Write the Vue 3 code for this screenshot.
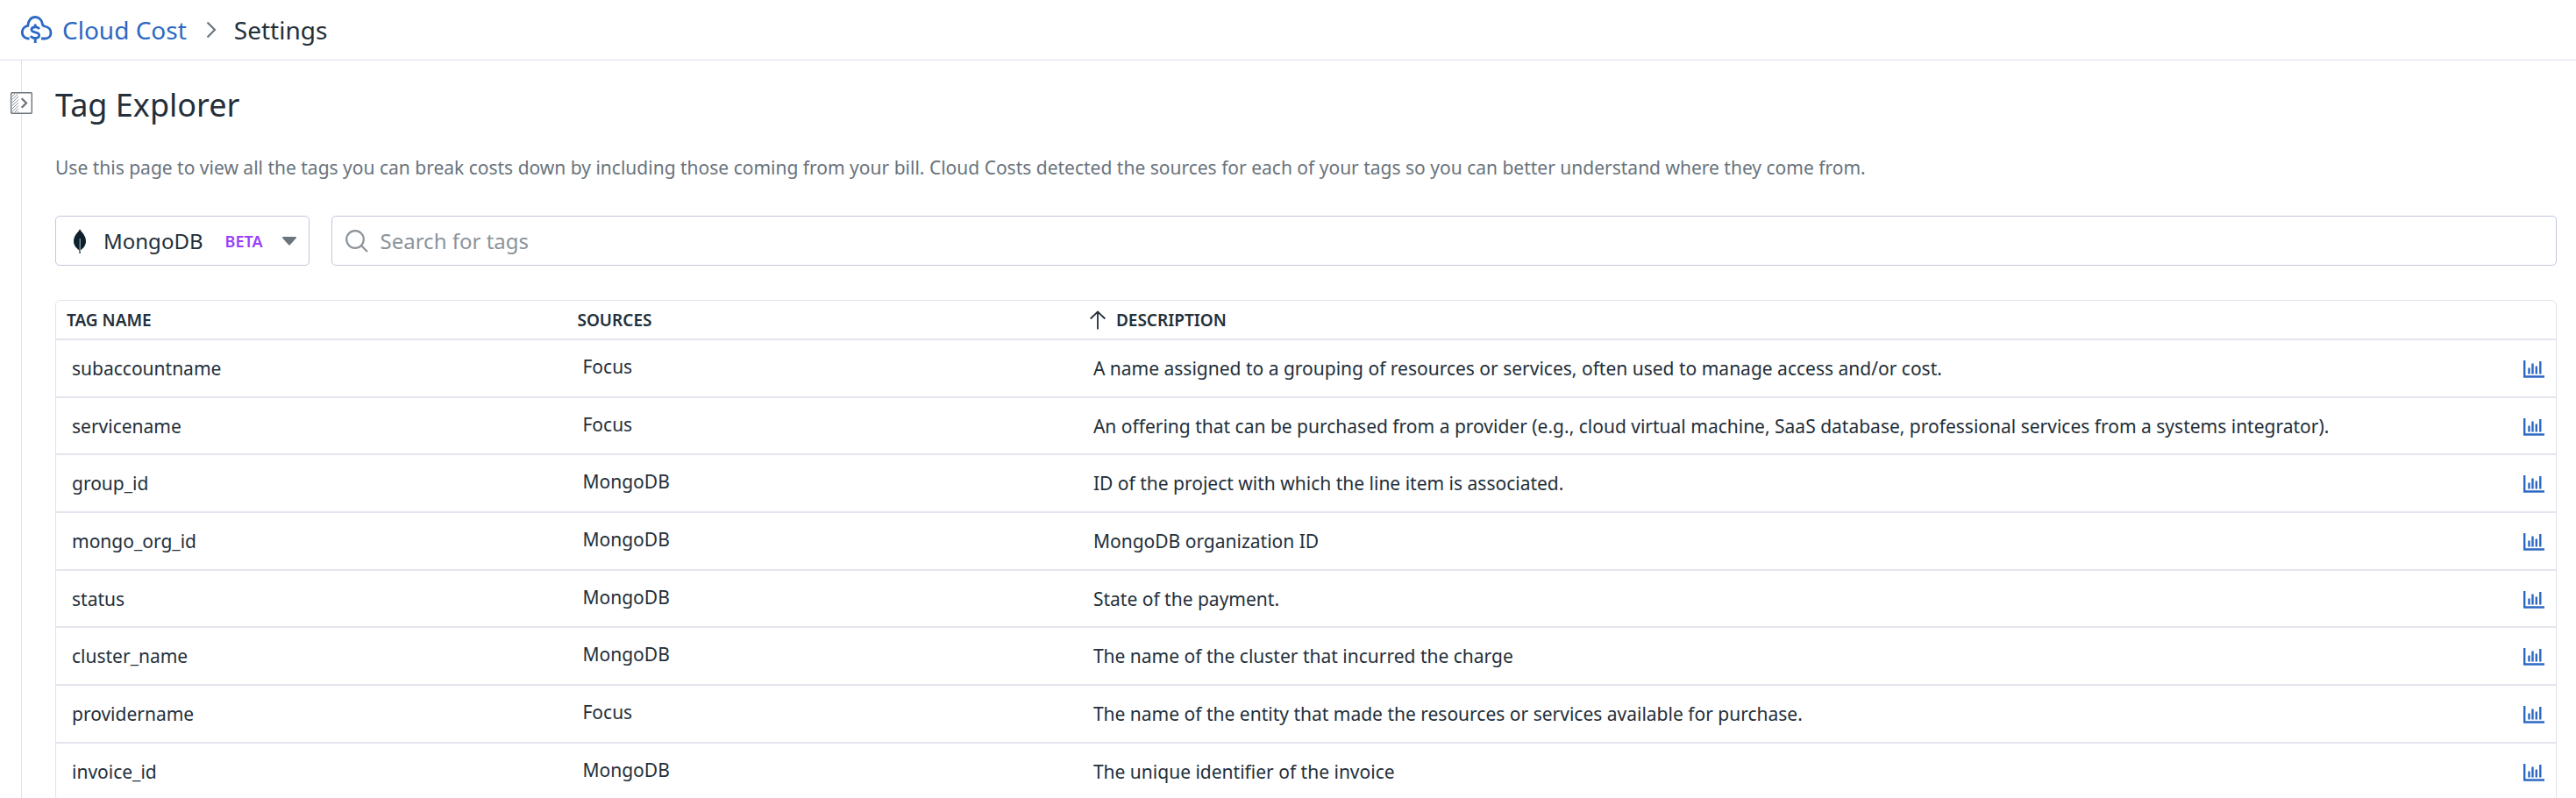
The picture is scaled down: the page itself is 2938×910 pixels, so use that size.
<script setup>
import { ref, computed } from 'vue'

const query = ref('')

const tags = [
  { name: 'subaccountname', source: 'Focus', description: 'A name assigned to a grouping of resources or services, often used to manage access and/or cost.' },
  { name: 'servicename', source: 'Focus', description: 'An offering that can be purchased from a provider (e.g., cloud virtual machine, SaaS database, professional services from a systems integrator).' },
  { name: 'group_id', source: 'MongoDB', description: 'ID of the project with which the line item is associated.' },
  { name: 'mongo_org_id', source: 'MongoDB', description: 'MongoDB organization ID' },
  { name: 'status', source: 'MongoDB', description: 'State of the payment.' },
  { name: 'cluster_name', source: 'MongoDB', description: 'The name of the cluster that incurred the charge' },
  { name: 'providername', source: 'Focus', description: 'The name of the entity that made the resources or services available for purchase.' },
  { name: 'invoice_id', source: 'MongoDB', description: 'The unique identifier of the invoice' },
]

const visibleTags = computed(() =>
  tags.filter((tag) => tag.name.includes(query.value.trim().toLowerCase()))
)
</script>

<template>
  <div class="page">
    <header class="topbar">
      <nav class="crumbs" aria-label="Breadcrumb">
        <a class="crumb-link" href="#cloud-cost">
          <svg class="cloud" viewBox="0 0 36 32" aria-hidden="true">
            <path d="M9.500 26H8.500C4.500 26 1.300 23 1.300 19C1.300 15 4 12 7.800 11.400C8 5.500 11.500 1.500 16.200 1.500C21 1.500 24.300 5.500 24.600 10.300C25 11.400 26 11.800 27 12C31.200 12.800 34 15.500 34 19.500C34 23.500 31 26 27.500 26H23" />
            <path d="M20.600 15.200C20 13.500 18.400 12.900 16.200 12.900C13.500 12.900 11.900 14 11.900 15.800C11.900 17.800 13.600 18.300 16.200 18.900C19 19.500 20.700 20.300 20.700 22.300C20.700 24.400 18.900 25.500 16.200 25.500C13.600 25.500 11.800 24.600 11.400 22.700" />
            <path d="M16.200 9.500V13M16.200 25.500V31" />
          </svg>
          <span>Cloud Cost</span>
        </a>
        <svg class="crumb-sep" viewBox="0 0 12 20" aria-hidden="true">
          <path d="M1.500 1.500L10 10L1.500 18.500" />
        </svg>
        <span class="crumb-current" aria-current="page">Settings</span>
      </nav>
    </header>

    <div class="body">
      <aside class="rail">
        <button class="expand" type="button" aria-label="Expand side panel">
          <svg viewBox="0 0 25 25" aria-hidden="true">
            <rect class="frame" x="0.700" y="0.700" width="23.600" height="23.600" rx="1" />
            <path class="hatch" d="M2 5L5 2M2 8.500L8.500 2M2 12L9 5M2 15.500L9 8.500M2 19L9 12M2 22.500L9 15.500M5 23L9 19M8 23L9 22" />
            <path class="arrow" d="M12.700 7.300L18 12.500L12.700 17.700" />
          </svg>
        </button>
      </aside>

      <main class="content">
        <h1>Tag Explorer</h1>
        <p class="intro">
          Use this page to view all the tags you can break costs down by including those coming from your bill. Cloud Costs detected the sources for each of your tags so you can better understand where they come from.
        </p>

        <div class="filters">
          <button class="provider" type="button" aria-haspopup="listbox">
            <svg class="leaf" viewBox="0 0 14 28" aria-hidden="true">
              <path class="leaf-body" d="M7 0C7.800 2 9 3 10.200 4.600C12.500 7.600 14 10.500 14 14C14 18.500 11.500 21.800 8 24.300L7.600 28H6.500L6.200 24.300C2.500 21.500 0 18.300 0 14C0 10.300 1.800 7.200 4 4.600C5.200 3.200 6.500 1.800 7 0Z" />
              <path class="leaf-vein" d="M7.200 11V26" />
            </svg>
            <span class="provider-name">MongoDB</span>
            <span class="beta">BETA</span>
            <svg class="caret" viewBox="0 0 16 10" aria-hidden="true">
              <path d="M1 0H15C16 0 16.300 1 15.600 1.700L8.800 9.300C8.300 9.800 7.700 9.800 7.200 9.300L0.400 1.700C-0.300 1 0 0 1 0Z" />
            </svg>
          </button>

          <label class="search">
            <svg viewBox="0 0 26 26" aria-hidden="true">
              <circle cx="11" cy="11" r="9.800" />
              <path d="M17.500 17.500L25 25" />
            </svg>
            <input v-model="query" type="text" placeholder="Search for tags" aria-label="Search for tags" />
          </label>
        </div>

        <div class="table-frame">
          <table>
            <colgroup>
              <col class="col-name" />
              <col class="col-source" />
              <col />
              <col class="col-action" />
            </colgroup>
            <thead>
              <tr>
                <th scope="col">TAG NAME</th>
                <th scope="col">SOURCES</th>
                <th scope="col" colspan="2" aria-sort="ascending">
                  <span class="sorted">
                    <svg viewBox="0 0 18 22" aria-hidden="true">
                      <path d="M9 21.500V1.500M0.700 9.500L9 1.500L17.300 9.500" />
                    </svg>
                    DESCRIPTION
                  </span>
                </th>
              </tr>
            </thead>
            <tbody>
              <tr v-for="tag in visibleTags" :key="tag.name">
                <td>{{ tag.name }}</td>
                <td class="source">{{ tag.source }}</td>
                <td>{{ tag.description }}</td>
                <td class="action">
                  <a href="#analytics" :aria-label="`View ${tag.name} in analytics`">
                    <svg viewBox="0 0 24 20" aria-hidden="true">
                      <path class="axis" d="M1.200 0V18.500H24" />
                      <path class="bars" d="M6.500 8.500V15.500M10.500 3.500V15.500M14.800 6.500V15.500M19.300 1V15.500" />
                    </svg>
                  </a>
                </td>
              </tr>
            </tbody>
          </table>
        </div>
      </main>
    </div>
  </div>
</template>

<style>
body {
  margin: 0;
  background: #fff;
}
</style>

<style scoped>
.page {
  display: flex;
  flex-direction: column;
  height: 100vh;
  overflow: hidden;
  color: #232f3a;
  font-family: "Noto Sans", sans-serif;
  font-size: 21px;
  line-height: 32px;
}

svg {
  display: block;
  flex: none;
  fill: none;
}

.topbar {
  flex: none;
  padding: 14px 24px;
  border-bottom: 1px solid #e0e1ec;
}

.crumbs {
  display: flex;
  align-items: center;
  font-size: 28px;
  line-height: 40px;
}

.crumb-link {
  display: flex;
  align-items: center;
  gap: 11px;
  color: #2c69c3;
  text-decoration: none;
}

.cloud {
  width: 36px;
  height: 32px;
  stroke: #2c69c3;
  stroke-width: 2.8;
}

.crumb-sep {
  width: 12px;
  height: 20px;
  margin: 0 20px 0 22px;
  stroke: #6c757d;
  stroke-width: 2.2;
}

.body {
  display: flex;
  flex: 1;
  min-height: 0;
}

.rail {
  flex: none;
  width: 24px;
  border-right: 1px solid #e0e1ec;
}

.expand {
  display: block;
  margin: 36px 0 0 12px;
  padding: 0;
  border: 0;
  background: #fff;
  cursor: pointer;
}

.expand svg {
  width: 25px;
  height: 25px;
}

.frame {
  stroke: #6c757d;
  stroke-width: 1.4;
}

.hatch {
  stroke: #6c757d;
  stroke-width: 0.8;
}

.arrow {
  stroke: #6c757d;
  stroke-width: 2.3;
}

.content {
  flex: 1;
  min-width: 0;
  padding: 24px 22px 0 38px;
}

h1 {
  margin: 0;
  font-size: 36px;
  font-weight: 400;
  line-height: 54px;
}

.intro {
  margin: 28px 0 39px;
  color: #69737c;
}

.filters {
  display: flex;
  gap: 25px;
}

.provider,
.search {
  display: flex;
  align-items: center;
  box-sizing: border-box;
  height: 57px;
  border: 1px solid #c2c8de;
  border-radius: 5px;
  background: #fff;
}

.provider {
  flex: none;
  padding: 0 14px 0 20px;
  color: inherit;
  font: inherit;
  font-size: 24px;
  cursor: pointer;
}

.leaf {
  width: 14px;
  height: 28px;
}

.leaf-body {
  fill: #0c212b;
}

.leaf-vein {
  stroke: #b8c4c2;
  stroke-width: 1;
}

.provider-name {
  margin-left: 20px;
}

.beta {
  margin: 0 22px 0 25px;
  color: #9a3ffb;
  font-size: 18px;
  font-weight: 600;
}

.caret {
  width: 16px;
  height: 10px;
  fill: #6c757d;
}

.search {
  flex: 1;
  gap: 14px;
  min-width: 0;
  padding: 0 15px;
}

.search svg {
  width: 26px;
  height: 26px;
  stroke: #8c9399;
  stroke-width: 2.2;
}

.search input {
  flex: 1;
  min-width: 0;
  padding: 0;
  border: 0;
  outline: 0;
  background: none;
  color: inherit;
  font: inherit;
  font-size: 24px;
}

.search input::placeholder {
  color: #8c9399;
  opacity: 1;
}

.table-frame {
  margin-top: 39px;
  border: 1px solid #e2e3ec;
  border-radius: 6px;
}

table {
  width: 100%;
  border-collapse: separate;
  border-spacing: 0;
  table-layout: fixed;
}

.col-name,
.col-source {
  width: 20.43%;
}

.col-action {
  width: 60px;
}

th {
  height: 45px;
  box-sizing: border-box;
  padding: 0 12px;
  border-bottom: 2px solid #e4e5ee;
  font-size: 19px;
  font-weight: 600;
  line-height: 24px;
  text-align: left;
}

.sorted {
  display: flex;
  align-items: center;
  gap: 12px;
  padding-left: 2px;
}

.sorted svg {
  width: 18px;
  height: 22px;
  stroke: #232f3a;
  stroke-width: 1.8;
}

td {
  height: 66px;
  box-sizing: border-box;
  padding: 0 18px;
  border-bottom: 2px solid #e4e5ee;
}

tr:nth-child(3n + 2) td {
  height: 65px;
}

.source {
  padding-bottom: 4px;
}

.action {
  padding: 2px 13px 0;
}

.action a {
  display: flex;
  justify-content: flex-end;
}

.action svg {
  width: 24px;
  height: 20px;
}

.axis,
.bars {
  stroke: #2c69c3;
  stroke-width: 2.4;
}
</style>
